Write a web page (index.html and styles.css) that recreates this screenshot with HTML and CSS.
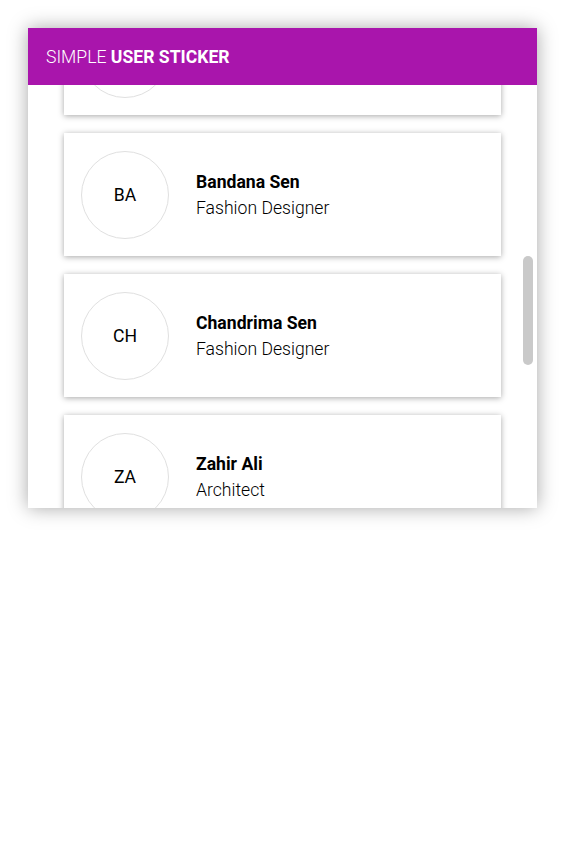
FILE: index.html
```html
<!DOCTYPE html>
<html>
<head>
<meta charset="utf-8">
<link rel="stylesheet" href="styles.css">
</head>
<body>
<div class="widget">
  <div class="header"><span class="title"><span class="light">SIMPLE</span> <span class="bold">USER STICKER</span></span></div>
  <div class="list" id="list">
    <div class="card"><div class="avatar">AD</div><div class="info"><div class="name">Arjun Das</div><div class="role">Developer</div></div></div>
    <div class="card"><div class="avatar">PR</div><div class="info"><div class="name">Priya Roy</div><div class="role">Photographer</div></div></div>
    <div class="card"><div class="avatar">RK</div><div class="info"><div class="name">Rahul Kumar</div><div class="role">Engineer</div></div></div>
    <div class="card"><div class="avatar">MB</div><div class="info"><div class="name">Mita Basu</div><div class="role">Teacher</div></div></div>
    <div class="card"><div class="avatar">AS</div><div class="info"><div class="name">Amit Sen</div><div class="role">Doctor</div></div></div>
    <div class="card"><div class="avatar">BA</div><div class="info"><div class="name">Bandana Sen</div><div class="role">Fashion Designer</div></div></div>
    <div class="card"><div class="avatar">CH</div><div class="info"><div class="name">Chandrima Sen</div><div class="role">Fashion Designer</div></div></div>
    <div class="card"><div class="avatar">ZA</div><div class="info"><div class="name">Zahir Ali</div><div class="role">Architect</div></div></div>
    <div class="card"><div class="avatar">SG</div><div class="info"><div class="name">Sourav Ghosh</div><div class="role">Writer</div></div></div>
    <div class="card"><div class="avatar">TM</div><div class="info"><div class="name">Tania Mitra</div><div class="role">Artist</div></div></div>
    <div class="card"><div class="avatar">VP</div><div class="info"><div class="name">Vikram Pal</div><div class="role">Manager</div></div></div>
  </div>
  <div class="thumb"></div>
</div>
<script src="script.js"></script>
</body>
</html>
```
FILE: styles.css
```css
html, body {
  margin: 0;
  padding: 0;
  background: #fff;
}
body {
  padding: 28px;
  font-family: Roboto, "Liberation Sans", sans-serif;
}
.widget {
  position: relative;
  width: 509px;
  height: 480px;
  display: flex;
  flex-direction: column;
  background: #fff;
  box-shadow: 0 0 18px rgba(0, 0, 0, 0.35);
}
.header {
  height: 57px;
  flex: none;
  background: #a915ac;
  color: #fff;
  display: flex;
  align-items: center;
  padding-left: 18px;
  font-size: 17.6px;
}
.header .light { font-weight: 300; }
.header .bold { font-weight: 700; }
.list {
  flex: 1;
  overflow-y: scroll;
  scrollbar-width: none;
  padding: 18px 36px 72px 36px;
}
.list::-webkit-scrollbar {
  display: none;
}
.thumb {
  position: absolute;
  left: 495px;
  top: 228px;
  width: 10px;
  height: 109px;
  border-radius: 5px;
  background: #c9c9c9;
}
.card {
  height: 123px;
  box-sizing: border-box;
  margin-bottom: 18px;
  background: #fff;
  box-shadow: 0 1px 6px rgba(0, 0, 0, 0.35);
  display: flex;
  align-items: center;
  padding-left: 17px;
}
.avatar {
  width: 88px;
  height: 88px;
  box-sizing: border-box;
  border: 1px solid #e0e0e0;
  border-radius: 50%;
  display: flex;
  align-items: center;
  justify-content: center;
  font-size: 17.6px;
  color: #000;
  flex: none;
}
.info {
  margin-left: 27px;
  display: flex;
  flex-direction: column;
}
.name {
  font-size: 17.6px;
  font-weight: 700;
  color: #000;
  line-height: 26px;
}
.role {
  font-size: 17.6px;
  font-weight: 300;
  color: #000;
  line-height: 26px;
}
```
FILE: script.js
```js
document.getElementById('list').scrollTop = 675;
```
